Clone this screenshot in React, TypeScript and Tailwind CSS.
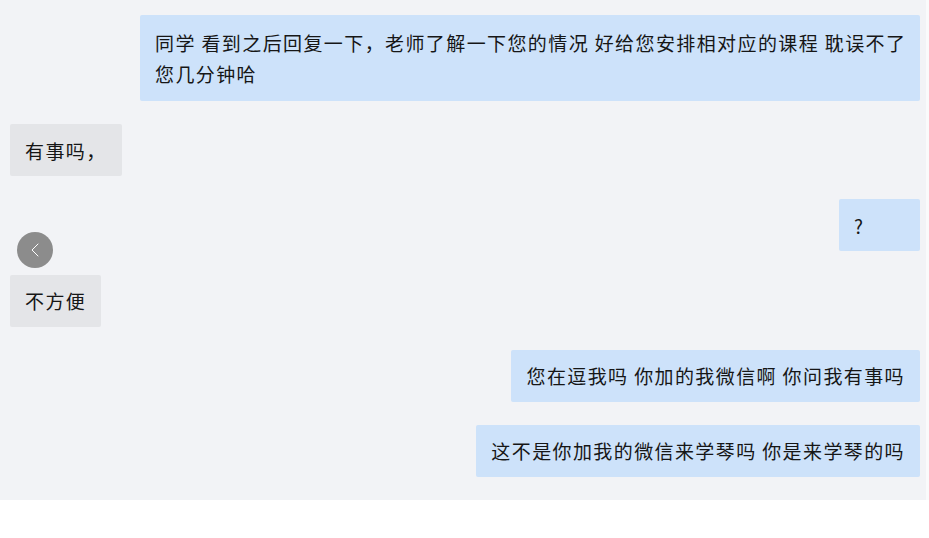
const font = {
  fontFamily: '"Noto Sans CJK SC", "Noto Sans", sans-serif',
};

function Bubble({
  side,
  children,
  className = "",
}: {
  side: "left" | "right";
  children: React.ReactNode;
  className?: string;
}) {
  const tone =
    side === "right" ? "bg-[#cde2fa]" : "bg-[#e4e5e8]";
  return (
    <div className={`flex ${side === "right" ? "justify-end" : "justify-start"}`}>
      <div
        className={`${tone} rounded-[2px] px-[15px] py-[10.5px] text-[19px] font-normal leading-[31px] tracking-[1.4px] text-[#161616] whitespace-nowrap ${className}`}
      >
        {children}
      </div>
    </div>
  );
}

export default function App() {
  return (
    <div className="h-[538px] w-[929px] bg-white" style={font}>
      <div className="relative flex h-[500px] flex-col gap-[23.2px] border-r-[3px] border-[#fafafb] bg-[#f2f3f6] pb-[24px] pl-[10px] pr-[6px] pt-[15px]">
        <Bubble side="right" className="w-[780px] !py-[12px]">
          同学 看到之后回复一下，老师了解一下您的情况 好给您安排相对应的课程 耽误不了
          <br />
          您几分钟哈
        </Bubble>
        <Bubble side="left">有事吗，</Bubble>
        <Bubble side="right" className="w-[81px]">
          ?
        </Bubble>
        <Bubble side="left">不方便</Bubble>
        <Bubble side="right">您在逗我吗 你加的我微信啊 你问我有事吗</Bubble>
        <Bubble side="right">这不是你加我的微信来学琴吗 你是来学琴的吗</Bubble>

        <button
          aria-label="返回"
          className="absolute left-[17px] top-[232px] flex h-[36px] w-[36px] items-center justify-center rounded-full bg-[#8c8c8c]"
        >
          <svg width="14" height="16" viewBox="0 0 14 16" fill="none">
            <path d="M10 2 L4 8 L10 14" stroke="#ffffff" strokeWidth="1" strokeLinecap="round" strokeLinejoin="round" />
          </svg>
        </button>
      </div>
    </div>
  );
}
